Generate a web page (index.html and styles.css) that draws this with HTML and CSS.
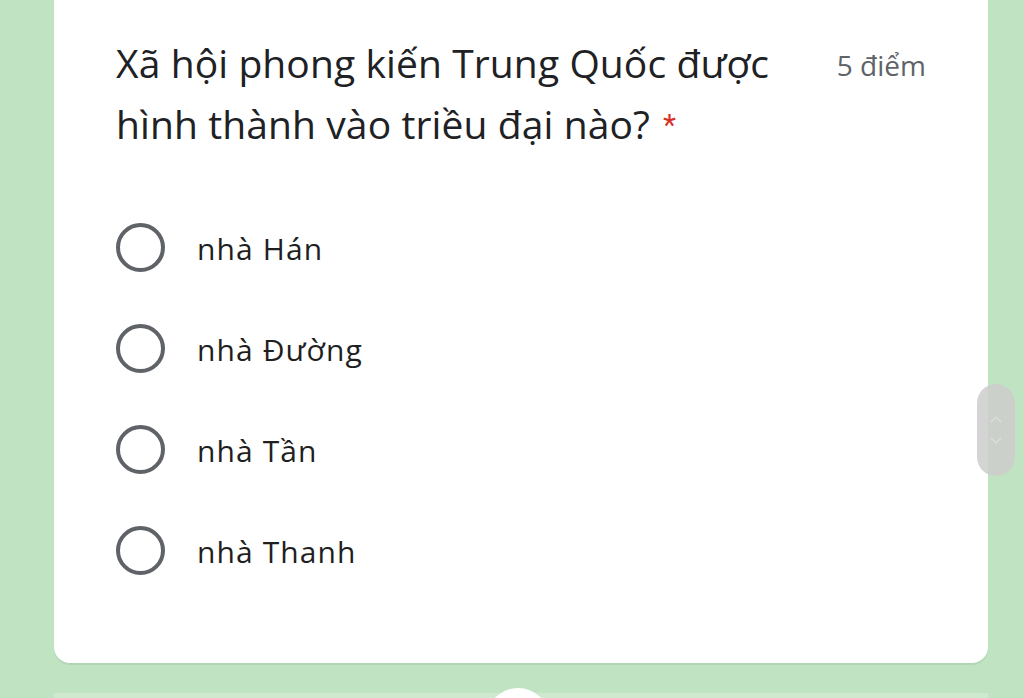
FILE: index.html
```html
<!DOCTYPE html>
<html lang="vi">
<head>
<meta charset="utf-8">
<link rel="stylesheet" href="styles.css">
</head>
<body>
<div class="page">
  <div class="card">
    <div class="head">
      <div class="title">Xã hội phong kiến Trung Quốc được hình thành vào triều đại nào?<span class="req">*</span></div>
      <div class="points">5 điểm</div>
    </div>
    <div class="options">
      <div class="opt"><span class="radio"></span><span class="label">nhà Hán</span></div>
      <div class="opt"><span class="radio"></span><span class="label">nhà Đường</span></div>
      <div class="opt"><span class="radio"></span><span class="label">nhà Tần</span></div>
      <div class="opt"><span class="radio"></span><span class="label">nhà Thanh</span></div>
    </div>
  </div>
  <div class="next"><span class="knob"></span></div>
</div>
<div class="scroller">
  <svg width="20" height="60" viewBox="0 0 20 60"><path d="M5 22 L10 17 L15 22" fill="none" stroke="#dcdcdc" stroke-width="1.5"/><path d="M5 38 L10 43 L15 38" fill="none" stroke="#dcdcdc" stroke-width="1.5"/></svg>
</div>
</body>
</html>
```
FILE: styles.css
```css
html, body { margin: 0; padding: 0; }
body {
  background: #c0e4c2;
  width: 1024px;
  height: 698px;
  overflow: hidden;
  font-family: "Open Sans", Roboto, sans-serif;
  position: relative;
}
.page { padding-left: 54px; width: 934px; }
.card {
  background: #fff;
  border-radius: 0 0 16px 16px;
  height: 663px;
  box-shadow: 0 2px 1px rgba(0,0,0,0.07);
  padding: 0 62px;
  box-sizing: border-box;
}
.head {
  display: flex;
  justify-content: space-between;
  align-items: flex-start;
  padding-top: 32px;
}
.title {
  font-size: 39px;
  letter-spacing: 0.1px;
  line-height: 61px;
  color: #202124;
  width: 700px;
}
.req {
  color: #d93025;
  font-family: Roboto, sans-serif;
  font-size: 30px;
  line-height: 1;
  margin-left: 13px;
  vertical-align: 4px;
}
.points {
  font-size: 28px;
  line-height: normal;
  color: #5f6368;
  padding-top: 14px;
}
.options { padding-top: 43px; }
.opt {
  display: flex;
  align-items: center;
  height: 101px;
}
.radio {
  width: 41px;
  height: 41px;
  border: 4px solid #5f6368;
  border-radius: 50%;
  flex: none;
}
.label {
  font-size: 30px;
  font-weight: 500;
  letter-spacing: 1.1px;
  color: #1f1f1f;
  margin-left: 32px;
  padding-top: 2px;
}
.next {
  margin-top: 30px;
  height: 10px;
  background: #cfe9d0;
  position: relative;
}
.knob {
  position: absolute;
  left: 432px;
  top: -5px;
  width: 64px;
  height: 64px;
  border-radius: 50%;
  background: #fff;
}
.scroller {
  position: absolute;
  left: 977px;
  top: 384px;
  width: 38px;
  height: 92px;
  border-radius: 19px;
  background: rgba(205,205,205,0.85);
  display: flex;
  align-items: center;
  justify-content: center;
}
```
